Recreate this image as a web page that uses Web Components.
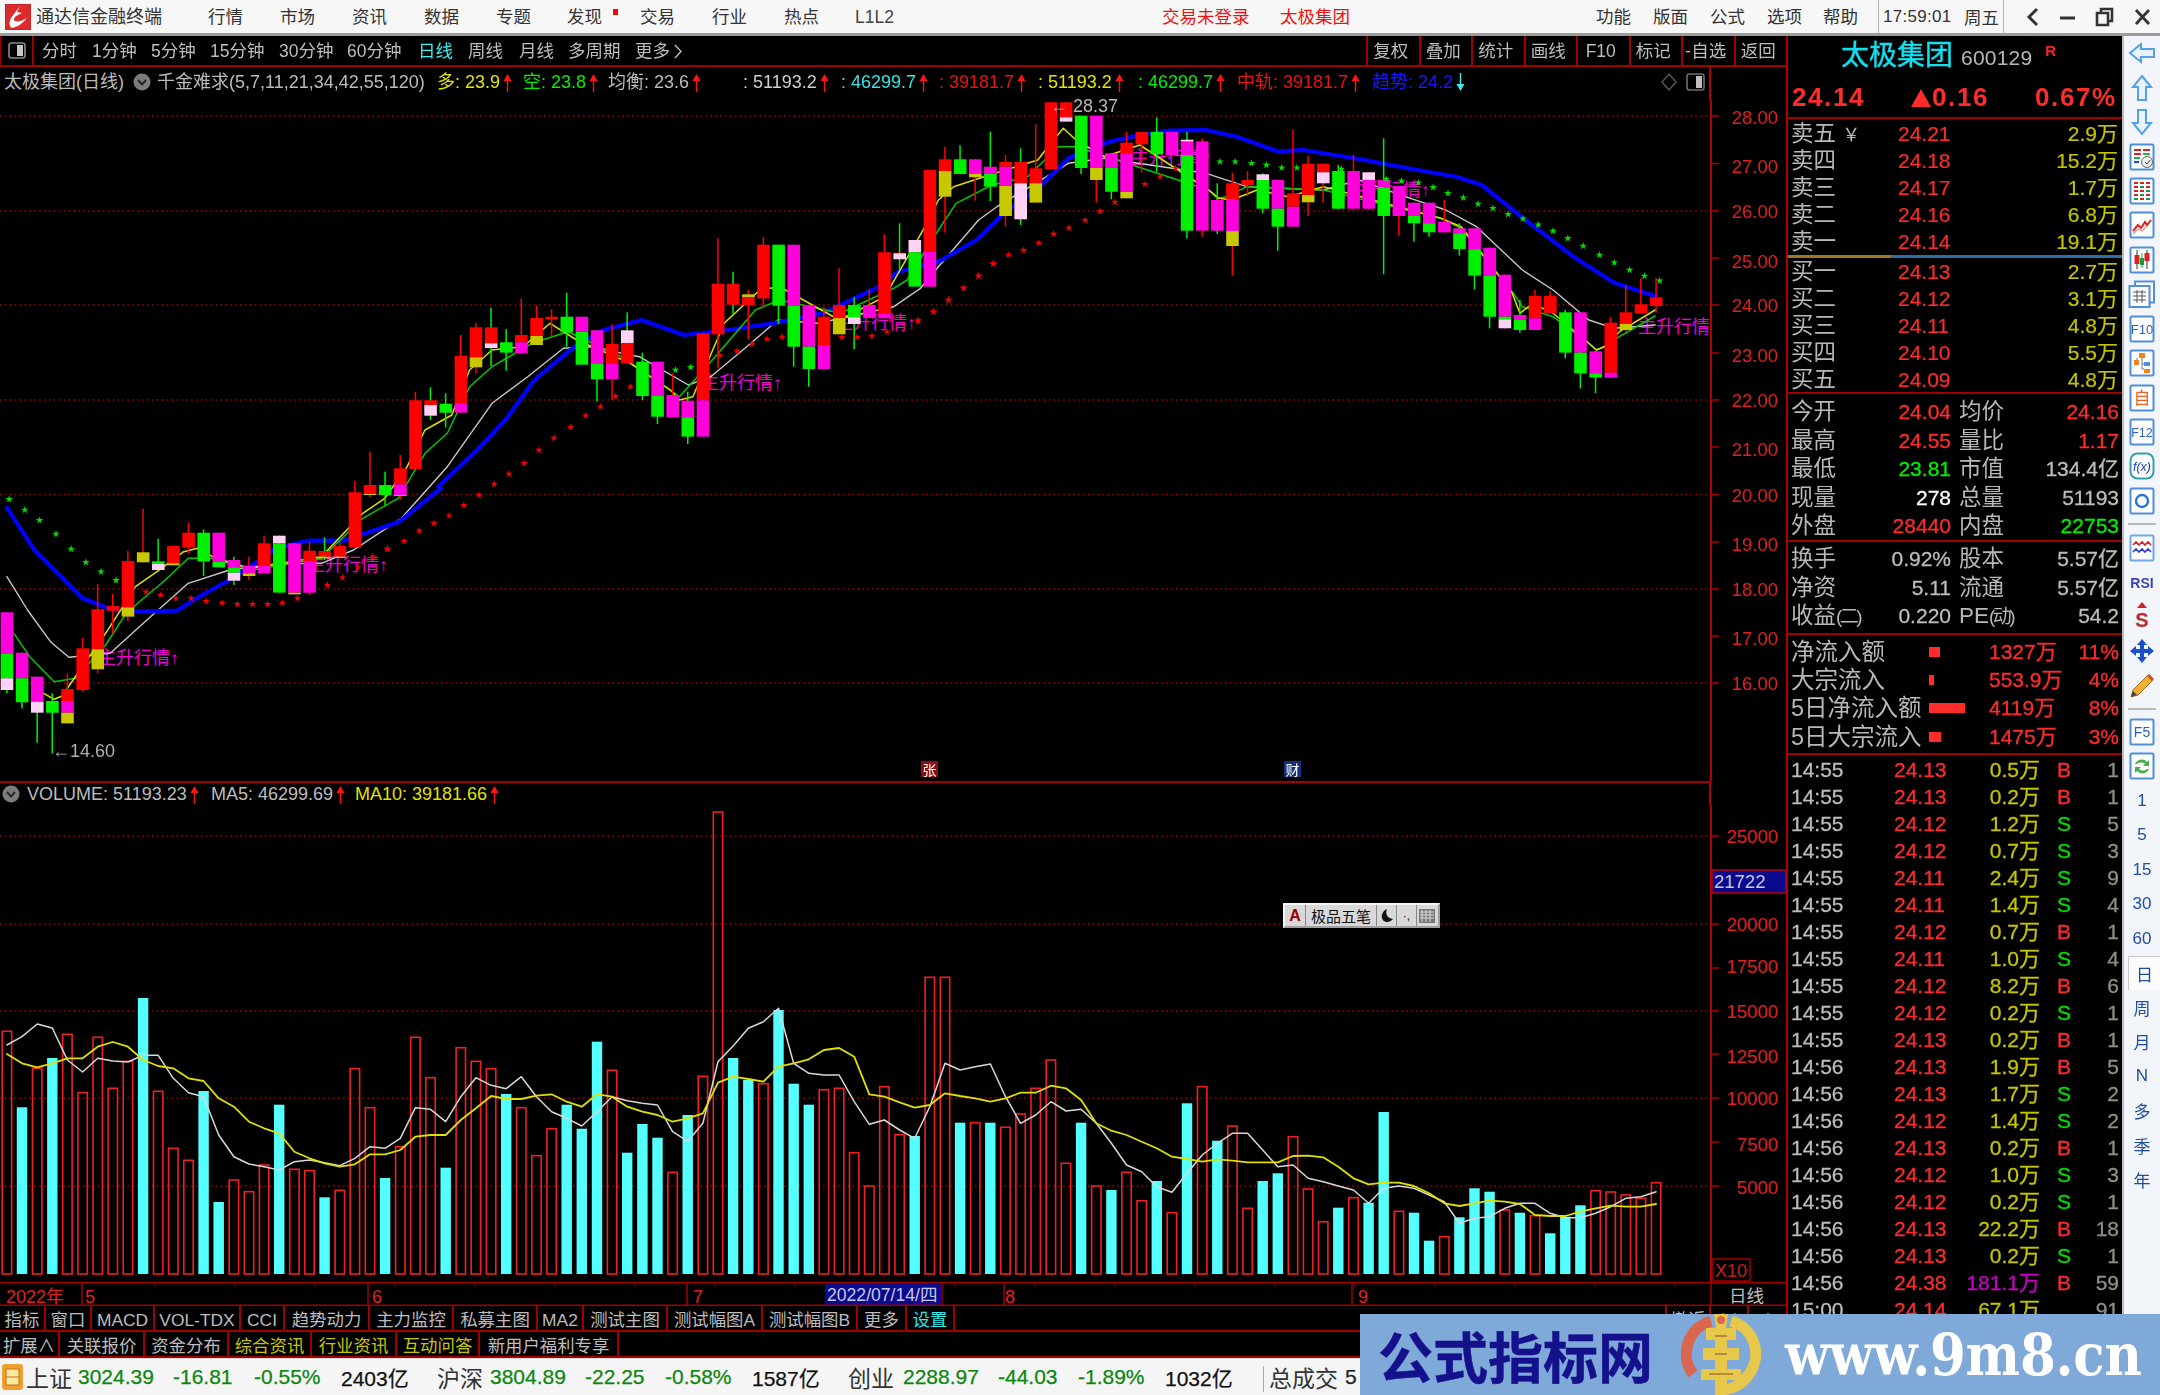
<!DOCTYPE html>
<html lang="zh"><head><meta charset="utf-8"><title>通达信金融终端</title>
<style>html,body{margin:0;padding:0;background:#000;overflow:hidden}body{width:2160px;height:1395px}</style>
</head><body><tdx-app></tdx-app>
<script>
const F="'Liberation Sans','Noto Sans CJK SC',sans-serif";
const COL={r:'#ff0000',g:'#00f000',m:'#ff00dc',p:'#ffd2f6',y:'#c8c800'};
function def(name,css,html){customElements.define(name,class extends HTMLElement{constructor(){super();const s=this.attachShadow({mode:'open'});s.innerHTML='<style>'+css+'</style>'+(typeof html==='function'?html(this):html);}});}
function seq(items,start,cls){let h='';let cur=start;items.forEach((it,k)=>{const next=k+1<items.length?items[k+1][0]:it[0]+(it[3]||200);if(it[0]>cur)h+=`<i style="flex:none;width:${it[0]-cur}px"></i>`;h+=`<span class="${cls||'s'}" style="flex:none;width:${next-it[0]}px;${it[2]?'color:'+it[2]:''}">${it[1]}</span>`;cur=next;});return h;}
const upA=(c='#ff1414')=>`<svg width="9" height="19" viewBox="0 0 9 19" style="flex:none;vertical-align:middle"><path d="M4.5 1L8.5 8H5.2V19H3.8V8H.5z" fill="${c}"/></svg>`;
const dnA=(c='#40e8e8')=>`<svg width="9" height="19" viewBox="0 0 9 19" style="flex:none;vertical-align:middle"><path d="M4.5 18L8.5 11H5.2V0H3.8V11H.5z" fill="${c}"/></svg>`;
const round=`<svg width="18" height="18" viewBox="0 0 18 18" style="vertical-align:middle;flex:none"><circle cx="9" cy="9" r="8.5" fill="#7c7c7c"/><path d="M5 7l4 4.5L13 7" fill="none" stroke="#262626" stroke-width="2"/></svg>`;

/* ---------- title bar ---------- */
const logo=`<svg width="26" height="26" viewBox="0 0 26 26" style="flex:none;margin:0 5px 0 5px"><rect width="26" height="26" fill="#dd2b2b" stroke="#b02020"/><path d="M15 2L6 14c-2 4-2 8 1 10 5-1 10-4 15-10-5 3-9 4-12 3-2-1-1-3 1-5l6-3-5-1z" fill="#fff"/></svg>`;
def('tdx-titlebar',`:host{display:flex;align-items:center;height:33px;background:#f7f7f7;border-bottom:3px solid #9c9c9c;font:17.5px ${F};color:#333;white-space:nowrap;box-sizing:content-box}
.s{display:block;line-height:35px;height:33px}.m{display:flex;align-items:center}.name{font-size:18px;flex:none;width:140px;line-height:35px;height:33px}
.time{flex:none;display:flex;align-items:center;height:33px;border-left:1px solid #b5b5b5;border-right:1px solid #b5b5b5;padding-left:4px;box-sizing:border-box;width:126px;margin-left:17px}
.time b{font-weight:400;width:81px;font-size:17px;letter-spacing:.3px}
.red{position:absolute;left:613px;top:9px;width:5px;height:6px;background:#f00}
svg{flex:none}.win{display:flex;align-items:center;margin-left:22px;gap:20px}
`,()=>{
 const it=[[208,'行情'],[280,'市场'],[352,'资讯'],[424,'数据'],[496,'专题'],[567,'发现'],[640,'交易'],[712,'行业'],[784,'热点'],[855,'L1L2','#444'],[1162,'交易未登录','#ee1111'],[1280,'太极集团','#ee1111'],[1596,'功能'],[1653,'版面'],[1710,'公式'],[1767,'选项'],[1823,'帮助',null,38]];
 return `${logo}<span class="name">通达信金融终端</span>${seq(it,176)}<span class="red"></span>
 <div class="time"><b>17:59:01</b><span>周五</span></div>
 <div class="win">
 <svg width="14" height="20" viewBox="0 0 14 20"><path d="M11 2L3 10l8 8" fill="none" stroke="#333" stroke-width="3"/></svg>
 <svg width="15" height="20" viewBox="0 0 15 20"><path d="M0 11h15" stroke="#333" stroke-width="3"/></svg>
 <svg width="19" height="20" viewBox="0 0 19 20"><path d="M6 5V2h11v12h-4M2 6h11v12H2z" fill="none" stroke="#333" stroke-width="2.6"/></svg>
 <svg width="17" height="20" viewBox="0 0 17 20"><path d="M2 3l13 14M15 3L2 17" stroke="#333" stroke-width="2.8"/></svg></div>`;});

/* ---------- tool bar ---------- */
def('tdx-toolbar',`:host{display:flex;height:29px;border-bottom:2px solid #a00000;font:17.5px/31px ${F};color:#bdbdbd;white-space:nowrap;background:#000;position:relative}
.tg{flex:none;width:34px;height:29px;border-right:2px solid #a00000;border-left:1px solid #a00000;display:flex;align-items:center;justify-content:center;box-sizing:border-box}
.s{display:block;height:29px}.b{flex:none;width:52.5px;height:29px;text-align:center;border-left:2px solid #a00000;box-sizing:border-box;padding-right:5px}.rt{display:flex;margin-left:auto}`,
()=>{const ch=`<svg width="8" height="15" viewBox="0 0 8 15" style="vertical-align:-2px;margin-left:4px"><path d="M1 1l6 6.5L1 14" fill="none" stroke="#bdbdbd" stroke-width="1.4"/></svg>`;
 const it=[[42,'分时'],[92,'1分钟'],[151,'5分钟'],[210,'15分钟'],[279,'30分钟'],[347,'60分钟'],[418,'日线','#3ef0f0'],[468,'周线'],[519,'月线'],[568,'多周期'],[635,'更多'+ch,null,80]];
 return `<div class="tg"><svg width="18" height="17" viewBox="0 0 18 17"><rect x="1" y="1" width="16" height="15" rx="2.5" fill="none" stroke="#8a8a8a" stroke-width="1.6"/><rect x="9" y="3" width="6" height="11" fill="#c8c8c8"/></svg></div>${seq(it,34)}
 <div class="rt">${['复权','叠加','统计','画线','F10','标记','-自选','返回'].map(t=>`<span class="b">${t}</span>`).join('')}</div>`;});

/* ---------- info rows ---------- */
const infoCss=`:host{display:flex;align-items:center;width:1711px;box-sizing:border-box;border-right:2px solid #b00000;font:18px/1 ${F};color:#bcbcbc;white-space:nowrap;background:#000;position:relative}.s{display:flex;align-items:center;gap:3px;box-sizing:border-box}`;
def('tdx-kinfo',infoCss+`:host{height:33px;padding-bottom:3px}`,()=>{
 const a=upA();
 const it=[[4,'太极集团(日线)'],[133,round],[157,'千金难求(5,7,11,21,34,42,55,120)'],[437,`<span>多: 23.9</span>${a}`,'#e6e600'],[523,`<span>空: 23.8</span>${a}`,'#00f000'],[608,`<span>均衡: 23.6</span>${a}`],[743,`<span>: 51193.2</span>${a}`,'#cfcfcf'],[841,`<span>: 46299.7</span>${a}`,'#33e6e6'],[939,`<span>: 39181.7</span>${a}`,'#e81414'],[1038,`<span>: 51193.2</span>${a}`,'#e6e600'],[1138,`<span>: 46299.7</span>${a}`,'#00f000'],[1237,`<span>中轨: 39181.7</span>${a}`,'#e81414'],[1372,`<span>趋势: 24.2</span>${dnA()}`,'#1818ff',288],[1660,`<svg width="18" height="20" viewBox="0 0 18 20"><path d="M9 2l7 8-7 8-7-8z" fill="none" stroke="#5a5a5a" stroke-width="1.4"/></svg>`],[1686,`<svg width="19" height="18" viewBox="0 0 19 18"><rect x="1" y="1" width="17" height="16" rx="2.5" fill="none" stroke="#707070" stroke-width="1.6"/><rect x="10" y="3" width="6" height="12" fill="#c0c0c0"/></svg>`,null,24]];
 return seq(it,0);});
def('tdx-vinfo',infoCss+`:host{height:24px;border-top:2px solid #a00000}`,()=>{
 const a=upA();const it=[[2,round],[27,`<span>VOLUME: 51193.23</span>${a}`],[211,`<span>MA5: 46299.69</span>${a}`],[355,`<span>MA10: 39181.66</span>${a}`,'#e0e000',144]];
 return seq(it,0);});

/* ---------- price chart ---------- */
const A=(p)=>[p[0]/2.178,440+p[1]/3],B=(p)=>[300+p[0]/2.24,200+p[1]/3],C=(p)=>[900+p[0]/1.96,90+p[1]/3];
const cx=i=>6.9+15.13*i;
const zy={A:y=>440+y/3,B:y=>200+y/3,C:y=>90+y/3};
const cA=[[517,760,'g','m',517,'g',642,'p',715,750],[638,805,'g','m',638,'g',715,787],[710,908,'g','m',710,'p',785,818],[760,940,'g','g',783,818],[700,850,'r','r',747,'m',783,'y',818,850],[593,755,'r','r',625,750],[432,700,'r','r',508,'y',628,688],[462,580,'r','r',498,512],[332,543,'r','r',363,'y',502,530],[206,367,'r','y',337,367],[296,390,'g','g',364,'p',372,390],[318,376,'r','r',318,'y',370,376],[247,340,'r','r',278,322],[268,408,'g','g',278,364],[278,382,'g','m',278,'g',366,382],[350,435,'g','m',360,'g',382,'p',398,422],[350,420,'r','m',377,'y',400,408],[288,400,'r','r',310,'m',378,400],[287,458,'g','p',287,'g',310,458],[310,463,'m','m',310,'y',458,463],[305,465,'r','r',332,'m',363,458],[292,360,'g','r',333,'y',350,355],[305,354,'r','r',318,'y',350,354],[122,322,'r','r',157,322],[35,172,'r','r',135,'y',162,165],[95,195,'g','g',135,165],[45,180,'r','r',85,'m',133,'y',165,168]];
const cB=[[575,807,'r','r',601,807],[562,660,'g','r',601,'p',615,647],[580,682,'g','g',611,638],[405,638,'r','r',467,'m',610,638],[368,520,'r','r',382,'y',472,502],[323,498,'g','r',382,'p',430,444],[387,512,'g','g',427,458],[296,460,'r','r',405,'m',427,460],[316,435,'r','r',354,'y',408,435],[328,410,'r','r',350,358],[278,440,'g','g',350,397],[350,494,'m','m',350,'g',395,494],[391,605,'g','m',391,'g',492,538],[373,600,'r','r',432,'m',490,538],[337,490,'g','p',391,'r',430,490],[458,600,'g','g',485,588],[485,672,'g','m',485,'g',588,650],[520,652,'r','m',585,652],[575,732,'g','m',602,'g',652,710],[400,710,'m','r',400,'m',601,710],[115,505,'r','r',251,403],[215,345,'g','r',251,314],[270,418,'r','y',283,'r',291,316],[112,325,'r','r',134,295],[134,372,'g','g',134,317],[134,500,'g','m',134,'g',318,440],[315,560,'g','m',315,'g',440,507],[320,507,'r','r',350,'m',435,507],[205,403,'r','r',315,'y',355,403],[292,448,'g','g',315,'p',352,372],[268,354,'r','m',315,354],[103,355,'r','r',157,'m',340,355],[70,210,'g','r',158,'p',160,178]];
const cC=[[450,590,'g','p',450,'g',487,590],[240,590,'m','r',240,'m',485,590],[170,428,'r','r',208,'y',243,320],[166,252,'g','g',208,252],[208,332,'r','m',208,'y',252,262],[125,333,'g','m',230,'g',252,290],[195,410,'r','r',216,'m',230,'y',288,378],[175,405,'g','r',216,'p',280,388],[103,338,'r','r',235,'y',280,338],[37,238,'r','r',37,238],[37,95,'g','r',37,'p',82,95],[77,252,'g','g',77,234],[77,337,'r','m',77,'y',234,270],[190,328,'g','m',190,'g',234,305],[125,325,'r','r',158,'m',190,'y',306,325],[126,248,'r','r',126,163],[82,245,'g','g',126,193],[126,196,'m','m',126,196],[125,445,'g','p',149,'m',155,'g',195,422],[145,440,'r','m',154,422],[280,432,'g','m',330,422],[248,557,'r','r',280,'m',328,'y',423,468],[243,318,'r','r',270,285],[250,370,'g','p',253,'g',270,356],[270,482,'g','m',270,'g',356,410],[118,410,'r','r',310,'m',350,410],[197,378,'r','r',221,'y',315,337],[221,338,'r','r',221,'p',247,280],[225,356,'g','g',243,356],[195,356,'r','m',243,356],[247,356,'m','p',247,'m',270,356],[145,553,'g','m',270,'g',292,378],[288,437,'r','m',288,378],[338,455,'g','m',338,'g',378,400],[338,440,'g','m',338,'g',400,427],[330,427,'r','m',395,427],[400,497,'g','m',415,'g',430,477],[415,598,'g','m',415,'g',478,557],[473,715,'g','m',473,'g',558,680],[554,715,'m','m',554,'g',680,'p',688,715],[630,728,'g','m',675,'g',690,720],[600,720,'r','r',617,'m',685,720],[603,670,'r','r',617,670],[660,805,'g','g',667,788],[667,895,'g','m',667,'g',788,850],[784,910,'g','m',784,'g',850,863],[680,863,'r','r',698,'m',848,863],[585,725,'r','r',667,'y',702,720],[565,670,'r','r',643,670],[565,668,'r','r',622,648]];
const poly=(pts,c,w)=>`<polyline points="${pts.map(p=>p[0].toFixed(1)+','+p[1].toFixed(1)).join(' ')}" fill="none" stroke="${c}" stroke-width="${w}" stroke-linejoin="round" stroke-linecap="round"/>`;
const L=(f,a)=>a.map(f);
const blue=[...L(A,[[15,203],[75,330],[130,405],[180,475],[245,510],[310,515],[385,512],[440,465],[500,420],[560,365],[600,325],[670,302],[750,302],[800,278],[870,245],[960,145]]),...L(B,[[310,860],[400,745],[460,660],[525,540],[610,445],[680,390],[765,360],[860,405],[960,390],[1060,370],[1170,340],[1290,265],[1340,215],[1430,185]]),...L(C,[[150,450],[200,375],[270,295],[330,205],[410,155],[470,135],[530,122],[600,120],[660,140],[740,184],[790,180],[900,207],[990,233],[1090,260],[1140,285],[1230,395],[1320,500],[1400,578],[1480,618]])];
const white=[...L(A,[[15,410],[60,510],[110,605],[150,652],[240,640],[320,540],[410,430],[500,390],[600,372],[700,370],[770,330],[880,230]]),...L(B,[[230,950],[330,800],[430,610],[510,530],[590,445],[650,440],[760,470],[870,555],[920,530],[1010,430],[1070,360],[1160,370],[1330,320],[1390,265],[1430,200],[1520,60]]),...L(C,[[190,350],[330,220],[400,205],[600,250],[680,290],[830,300],[900,270],[990,320],[1070,360],[1130,410],[1220,540],[1280,600],[1350,690],[1400,715],[1480,705]])];
const yellow=[...L(A,[[95,760],[118,778],[135,768],[230,580],[258,520],[295,440],[345,392],[400,335],[430,325],[470,355],[545,385],[700,350],[790,220]]),...L(B,[[190,895],[240,800],[280,690],[340,645],[380,510],[430,450],[500,440],[560,370],[620,420],[740,490],[830,570],[850,600],[880,590],[950,370],[1030,270],[1074,260],[1208,360],[1310,290],[1400,80],[1430,0]]),...L(C,[[105,290],[175,255],[270,210],[290,170],[320,115],[345,150],[400,200],[470,165],[605,300],[625,325],[650,330],[700,300],[760,320],[830,290],[1060,385],[1100,410],[1200,610],[1215,670],[1240,640],[1280,670],[1350,760],[1365,780],[1380,770],[1410,725],[1480,660]])];
const green=[...L(A,[[30,580],[65,650],[118,725],[165,715],[230,615],[270,530],[300,490],[360,420],[410,355],[460,355],[550,390],[700,355],[790,235]]),...L(B,[[220,895],[280,760],[330,700],[380,560],[430,500],[520,430],[600,395],[720,470],[850,590],[930,470],[1020,330],[1074,300],[1210,340],[1330,265],[1360,240],[1430,90]]),...L(C,[[110,340],[180,285],[250,260],[310,170],[345,170],[605,300],[622,325],[640,320],[680,290],[830,300],[1060,385],[1100,415],[1200,605],[1220,650],[1280,680],[1350,760],[1365,780],[1380,770],[1410,740],[1480,678]])];
const redS=[...L(A,[[318,456],[350,466],[383,475],[416,475],[449,484],[484,489],[517,493],[550,493],[583,493],[615,489],[648,475],[713,435],[746,413],[779,380],[812,350],[844,327]]),...L(B,[[196,1047],[233,1024],[267,992],[300,970],[334,947],[367,916],[401,885],[435,853],[468,822],[502,790],[535,750],[569,714],[606,682],[640,647],[673,620],[707,589],[740,560],[940,465],[979,453],[1013,433],[1046,417],[1080,411],[1214,412],[1248,412],[1281,408],[1315,395],[1385,362],[1419,335],[1453,300],[1486,264],[1520,228],[1553,190]]),...L(C,[[35,692],[66,665],[95,630],[125,594],[154,558],[183,522],[213,495],[242,481],[272,459],[301,432],[331,414],[363,391],[392,364],[421,337],[480,283],[510,260],[540,235]])];
const grnS=[...L(A,[[20,178],[54,210],[86,241],[122,282],[155,327],[187,367],[220,395],[253,421]]),...L(B,[[841,510],[875,502]]),...L(C,[[627,215],[657,215],[689,220],[718,225],[748,233],[778,233],[865,237],[953,268],[983,273],[1016,278],[1045,292],[1074,310],[1104,323],[1133,342],[1162,355],[1192,373],[1221,386],[1251,404],[1280,423],[1309,445],[1339,468],[1371,495],[1400,518],[1430,540],[1459,558],[1489,572]])];
function star(p,c){let s=[];for(let k=0;k<10;k++){const r=k%2?1.5:4,a=-Math.PI/2+k*Math.PI/5;s.push((p[0]+r*Math.cos(a)).toFixed(1)+','+(p[1]+r*Math.sin(a)).toFixed(1));}return `<polygon points="${s.join(' ')}" fill="${c}"/>`;}
function candle(a,i,zf){const x=cx(i);let h=`<rect x="${(x-.8).toFixed(1)}" y="${zf(a[0]).toFixed(1)}" width="1.5" height="${(zf(a[1])-zf(a[0])).toFixed(1)}" fill="${COL[a[2]]}"/>`;
 const n=a.length;for(let k=3;k<n-1;k+=2){const y0=zf(a[k+1]),y1=zf(k+3<n?a[k+3]:a[n-1]);h+=`<rect x="${(x-6.2).toFixed(1)}" y="${y0.toFixed(1)}" width="12.6" height="${(y1-y0).toFixed(1)}" fill="${COL[a[k]]}"/>`;}return h;}
const svgTxt=`font-family:${F};`;
const dots=(y)=>`<line x1="0" x2="1711" y1="${y}" y2="${y}" stroke="#a80000" stroke-width="1.3" stroke-dasharray="1.5 3.4"/>`;
def('tdx-kchart',`:host{display:block;position:relative;width:1787px;height:681px;background:#000}svg{display:block;overflow:visible}`,()=>{
 let g='';[116,211,305,400,494.5,589,683].forEach(y=>g+=dots(y));
 const ax=[['28.00',116,117],['27.00',163.5,166],['26.00',211,211],['25.00',258,261],['24.00',305,305],['23.00',353,355],['22.00',400,400],['21.00',447,449],['20.00',494.5,495],['19.00',542,544],['18.00',589,589],['17.00',636,638],['16.00',683,683]];
 let t='';ax.forEach(a=>{t+=`<line x1="1711" x2="1719" y1="${a[1]}" y2="${a[1]}" stroke="#b00000" stroke-width="1.5"/><text x="1778" y="${a[2]+6.5}" text-anchor="end" font-size="18.5" fill="#e02020">${a[0]}</text>`;});
 const labels=[[98,664],[307,571],[701,389],[835,329],[1131,164],[1349,196],[1638,333]].map(p=>`<text x="${p[0]}" y="${p[1]}" font-size="18" fill="#f000d8">主升行情↑</text>`).join('');
 let cs='';cA.forEach((a,k)=>cs+=candle(a,k,zy.A));cB.forEach((a,k)=>cs+=candle(a,k+27,zy.B));cC.forEach((a,k)=>cs+=candle(a,k+60,zy.C));
 return `<svg width="1787" height="681" viewBox="0 100 1787 681" style="${svgTxt}"><defs><clipPath id="cl"><rect x="0" y="100" width="1710" height="681"/></clipPath></defs>${g}<g clip-path="url(#cl)">${labels}${poly(white,'#c8c8c8',1.4)}${poly(blue,'#0000ff',4.2)}${poly(green,'#00c800',1.5)}${poly(yellow,'#e0e000',1.5)}${cs}${redS.map(p=>star(p,'#f00000')).join('')}${grnS.map(p=>star(p,'#00e000')).join('')}</g>
 <text x="1050" y="112" font-size="18" fill="#b8b8b8">←</text><text x="1073" y="112" font-size="18" fill="#b8b8b8">28.37</text>
 <text x="52" y="757" font-size="18" fill="#b0b0b0">←14.60</text>
 <rect x="921" y="761" width="17" height="16" fill="#8a1010"/><text x="929.5" y="775" text-anchor="middle" font-size="14" fill="#fff">张</text>
 <rect x="1284" y="761" width="17" height="16" fill="#15307a"/><text x="1292.5" y="775" text-anchor="middle" font-size="14" fill="#fff">财</text>
 <line x1="1711" x2="1711" y1="100" y2="781" stroke="#b00000" stroke-width="2"/>${t}</svg>`;});

/* ---------- volume chart ---------- */
const v10=[154,382,265,234,163,338,172,325,244,54,334,505,541,333,666,600,635,555,374,568,572,652,631,266,383,594,500,172,293,563,203,244,266,342,383,527,446,374,446,185,271,518,432,473,577,405,289,-504,234,300,311,90,311,374,329,325,518,618,320,464];
const v11=[858,382,382,818,818,818,832,792,715,630,940,818,1008,1020,967,1052,993,1088,760,710,872,828,1075,993,970,860,1017,1115,1073,1043,1058,786,1084,1088,1172,1160,1102,1015,1025,1080,1088,1097,1150,1100,1066,1022,1026,1035,1045,998];
const wh10=[195,170,132,144,240,276,235,243,246,226,226,295,338,350,465,530,552,560,570,545,540,548,557,535,500,505,475,383,388,425,350,293,316,326,290,350,395,415,438,395,350,362,370,375,455,484,430,245,198,145,125,85,250,280,285,285,365,433,420];
const wh11=[840,865,770,640,660,650,642,740,820,795,755,783,778,820,880,945,965,1010,1027,970,915,880,850,850,900,950,945,985,995,1008,1020,1060,1015,1008,1015,1035,1055,1120,1105,1100,1075,1060,1060,1090,1103,1103,1090,1070,1045,1040,1025];
const ye10=[222,250,262,250,235,235,200,186,200,240,258,265,295,303,355,380,425,445,460,515,535,550,560,553,523,523,510,470,465,465,420,385,348,357,357,347,343,365,380,343,350,380,395,405,425,415,400,308,290,297,305,260,250,238,210,204,230,343,350];
const ye11=[757,773,765,730,738,745,755,745,728,728,707,715,750,820,842,855,875,895,920,927,935,928,932,937,937,937,918,917,922,950,985,1003,998,998,1008,1030,1060,1068,1060,1052,1055,1062,1095,1098,1098,1085,1075,1067,1070,1070,1062];
const vy=(a,b)=>[...a.map((y,i)=>[cx(i),980+y/3]),...b.map((y,i)=>[cx(i+59),850+y/3])];
const types=['R','C','R','C','R','R','R','R','R','C','R','R','R','C','C','R','R','R','C','R','R','C','R','R','R','C','R','R','R','C','R','R','R','C','R','R','R','C','C','C','R','C','C','C','R','C','R','R','C','C','R','C','C','C','R','R','R','R','R','R','C','R','R','C','R','C','R','R','R','R','R','C','R','C','R','R','C','R','C','R','C','R','R','C','C','R','R','R','C','R','C','C','R','C','C','R','C','C','C','R','C','R','C','C','C','R','R','R','R','R'];
def('tdx-vchart',`:host{display:block;width:1787px;height:477px;background:#000}svg{display:block}`,()=>{
 let b='';const base=1274;
 types.forEach((ty,i)=>{const top=i<60?980+v10[i]/3:850+v11[i-60]/3,x=cx(i);
  b+=ty==='C'?`<rect x="${(x-5.2).toFixed(1)}" y="${top.toFixed(1)}" width="10.4" height="${(base-top).toFixed(1)}" fill="#54ffff"/>`:`<rect x="${(x-4.7).toFixed(1)}" y="${top.toFixed(1)}" width="9.4" height="${(base-top).toFixed(1)}" fill="none" stroke="#ee2020" stroke-width="1.6"/>`;});
 let g='';[836,924,1011,1098,1186].forEach(y=>g+=dots(y));
 const ax=[['25000',836,0],['20000',924,0],['17500',968,-2],['15000',1011,0],['12500',1054,2],['10000',1098,0],['7500',1142,2],['5000',1186,1]];
 let t='';ax.forEach(a=>{t+=`<line x1="1711" x2="1719" y1="${a[1]}" y2="${a[1]}" stroke="#b00000" stroke-width="1.5"/><text x="1778" y="${a[1]+a[2]+6.5}" text-anchor="end" font-size="18.5" fill="#e02020">${a[0]}</text>`;});
 return `<svg width="1787" height="477" viewBox="0 805 1787 477" style="${svgTxt}">${g}${b}${poly(vy(wh10,wh11),'#d8d8d8',1.5)}${poly(vy(ye10,ye11),'#e0e000',1.8)}
 <line x1="1711" x2="1711" y1="805" y2="1282" stroke="#b00000" stroke-width="2"/>${t}
 <rect x="1712" y="870" width="74" height="23" fill="#0a0a8c" stroke="#c00000" stroke-width="1.5"/><text x="1714" y="888" font-size="18.5" fill="#c8c8e8">21722</text>
 <rect x="1713" y="1259" width="37" height="22" fill="none" stroke="#a00000" stroke-width="1.5"/><text x="1715" y="1277" font-size="18" fill="#c02020">X10</text></svg>`;});

/* ---------- floating input method bar ---------- */
def('tdx-ime',`:host{position:absolute;left:1283px;top:903px;width:157px;height:25px;box-sizing:border-box;background:#d8d8d8;border:2px outset #f4f4f4;display:flex;align-items:center;font:16px ${F};color:#111;white-space:nowrap}
span{display:flex;align-items:center;justify-content:center;height:100%;border-right:1px solid #888;box-sizing:border-box}`,
`<span style="width:21px;color:#a00000;font-weight:700">A</span><span style="width:71px;font-size:15px">极品五笔</span><span style="width:20px"><svg width="12" height="14" viewBox="0 0 12 14"><path d="M6 0c-2 5 0 9 6 10-3 4-10 4-11-1C0 5 3 1 6 0z" fill="#111"/></svg></span><span style="width:20px;font-size:12px">·,</span><span style="width:20px;border:0"><svg width="16" height="14" viewBox="0 0 16 14"><rect width="16" height="14" fill="#777"/><path d="M1 3h14M1 6h14M1 9h14M3 1v12M7 1v12M11 1v12" stroke="#ddd"/></svg></span>`);

/* ---------- date axis ---------- */
def('tdx-dateaxis',`:host{display:block;width:1787px;height:24px;background:#000}svg{display:block}`,()=>{
 let v='';[82,368,687,942,1004,1352,1711].forEach(x=>v+=`<line x1="${x}" x2="${x}" y1="1283" y2="1306" stroke="#a00000" stroke-width="1.5"/>`);
 let tk='';for(let x=155;x<1700;x+=80)tk+=`<line x1="${x}" x2="${x}" y1="1283" y2="1287" stroke="#a00000"/>`;
 const l=[[6,'2022年'],[85,'5'],[372,'6'],[693,'7'],[1005,'8'],[1358,'9']].map(a=>`<text x="${a[0]}" y="1303" font-size="18" fill="#e02020">${a[1]}</text>`).join('');
 return `<svg width="1787" height="24" viewBox="0 1282 1787 24" style="${svgTxt}"><line x1="0" x2="1787" y1="1282.5" y2="1282.5" stroke="#a00000" stroke-width="2"/>${v}${tk}${l}
 <rect x="825" y="1284" width="117" height="21" fill="#0a0a8c"/><text x="827" y="1301" font-size="17.6" fill="#c8c8e8">2022/07/14/四</text>
 <text x="1729" y="1302" font-size="17.5" fill="#c0c0c0" text-anchor="start">日线</text>
 <line x1="0" x2="1787" y1="1305.5" y2="1305.5" stroke="#a00000" stroke-width="2"/></svg>`;});

/* ---------- tabs ---------- */
def('tdx-tab',`:host{display:block;flex:none;box-sizing:border-box;height:100%;border-right:2px solid #a00000;text-align:center;overflow:hidden;white-space:nowrap}`,`<slot></slot>`);
def('tdx-tabs',`:host{display:flex;width:1787px;height:26px;box-sizing:border-box;background:#000;border-bottom:2px solid #a00000;font:17.4px/28px ${F};color:#bdbdbd}.sp{flex:1}`,
 e=>`<slot></slot><span class="sp"></span><slot name="end"></slot>`);

/* ---------- quote panel ---------- */
const rowsBook=[['卖五 <small>￥</small>','24.21','2.9万'],['卖四','24.18','15.2万'],['卖三','24.17','1.7万'],['卖二','24.16','6.8万'],['卖一','24.14','19.1万']];
const rowsBuy=[['买一','24.13','2.7万'],['买二','24.12','3.1万'],['买三','24.11','4.8万'],['买四','24.10','5.5万'],['买五','24.09','4.8万']];
const trades=`14:55 24.13 0.5 B 1|14:55 24.13 0.2 B 1|14:55 24.12 1.2 S 5|14:55 24.12 0.7 S 3|14:55 24.11 2.4 S 9|14:55 24.11 1.4 S 4|14:55 24.12 0.7 B 1|14:55 24.11 1.0 S 4|14:55 24.12 8.2 B 6|14:55 24.12 0.2 S 1|14:55 24.13 0.2 B 1|14:56 24.13 1.9 B 5|14:56 24.13 1.7 S 2|14:56 24.12 1.4 S 2|14:56 24.13 0.2 B 1|14:56 24.12 1.0 S 3|14:56 24.12 0.2 S 1|14:56 24.13 22.2 B 18|14:56 24.13 0.2 S 1|14:56 24.38 181.1 B 59|15:00 24.14 67.1  91`.split('|').map(s=>s.split(' '));
def('tdx-book',`:host{display:block;border-bottom:2px solid #a00000;padding-top:1px;height:275px;box-sizing:border-box}
.r{display:grid;grid-template-columns:107px 1fr auto;height:27px;line-height:27px;padding:0 4px 0 3px;font-size:21px;-webkit-text-stroke:.2px}
.l{font-size:22.5px;color:#b8b8b8;-webkit-text-stroke:0}.l small{font-size:18px}.p{color:#ff2c2c}.v{color:#c4c400}
.d{height:3px;margin:0;background:linear-gradient(90deg,#a07820 0 103px,#2c6fa8 103px)}`,()=>{
 const f=a=>a.map(r=>`<div class="r"><span class="l">${r[0]}</span><span class="p">${r[1]}</span><span class="v">${r[2]}</span></div>`).join('');
 return f(rowsBook)+'<div class="d"></div>'+f(rowsBuy);});
const kv=(l1,v1,c1,l2,v2,c2)=>`<div class="r"><div class="c"><span class="l">${l1}</span><span style="color:${c1}">${v1}</span></div><div class="c"><span class="l">${l2}</span><span style="color:${c2}">${v2}</span></div></div>`;
def('tdx-stats',`:host{display:block;border-bottom:2px solid #a00000;padding:4px 0 0 0;box-sizing:border-box;height:148px}
.r{display:grid;grid-template-columns:160px 160px;gap:8px;height:28.5px;line-height:28.5px;padding-left:3px;font-size:21px;-webkit-text-stroke:.3px}
.c{display:flex;justify-content:space-between;white-space:nowrap}.l{font-size:22.5px;color:#b8b8b8;-webkit-text-stroke:0}.a{}`,()=>{
 const R='#ff2c2c',W='#bcbcbc',G='#00f000';
 return kv('今开','24.04',R,'均价','24.16',R)+kv('最高','24.55',R,'量比','1.17',R)+kv('最低','23.81',G,'市值','134.4亿',W)+kv('现量','278','#fff','总量','51193',W)+kv('外盘','28440',R,'内盘','22753',G);});
def('tdx-stats2',`:host{display:block;border-bottom:2px solid #a00000;padding:3px 0 0 0;box-sizing:border-box;height:93px}
.r{display:grid;grid-template-columns:160px 160px;gap:8px;height:28.5px;line-height:28.5px;padding-left:3px;font-size:21px;-webkit-text-stroke:.3px}
.c{display:flex;justify-content:space-between;white-space:nowrap}.l{font-size:22.5px;color:#b8b8b8;-webkit-text-stroke:0}.n{letter-spacing:-2.5px;font-size:19px;padding-right:3px}`,()=>{
 const W='#bcbcbc';return kv('换手','0.92%',W,'股本','5.57亿',W)+kv('净资','5.11',W,'流通','5.57亿',W)+kv('收益<span class="n">(二)</span>','0.220',W,'PE<span class="n">(动)</span>','54.2',W);});
def('tdx-flow',`:host{display:block;border-bottom:2px solid #a00000;padding:3px 0 0 0;box-sizing:border-box;height:120px}
.r{display:grid;grid-template-columns:138px 60px 66px 64px;height:28.2px;line-height:28.2px;padding-left:3px;font-size:21px;color:#ff2c2c;-webkit-text-stroke:.3px;white-space:nowrap}
.l{font-size:23.5px;color:#b8b8b8;-webkit-text-stroke:0}.n{text-align:right}.bw{display:flex;align-items:center}.bw i{display:block;height:10px;background:#ff2c2c}`,()=>
 [['净流入额',11,'1327万','11%'],['大宗流入',5,'553.9万','4%'],['5日净流入额',36,'4119万','8%'],['5日大宗流入',12,'1475万','3%']].map(r=>`<div class="r"><span class="l">${r[0]}</span><span class="bw"><i style="width:${r[1]}px"></i></span><span class="n">${r[2]}</span><span class="n">${r[3]}</span></div>`).join(''));
def('tdx-trades',`:host{display:block;flex:1;overflow:hidden;font-size:21px;-webkit-text-stroke:.3px;white-space:nowrap;padding-top:1px}
.r{display:grid;grid-template-columns:103px 60px 86px 40px 39px;height:27px;line-height:27px;padding-left:3px}
.t{color:#bcbcbc}.p{color:#ff2c2c}.v{text-align:right;color:#c4c400}.v.big{color:#c800c8}.s{padding-left:17px}.n{text-align:right;color:#8f8f8f}`,()=>
 trades.map(a=>`<div class="r"><span class="t">${a[0]}</span><span class="p">${a[1]}</span><span class="v${a[2]==='181.1'?' big':''}">${a[2]}万</span><span class="s" style="color:${a[3]==='B'?'#ff2c2c':'#00e000'}">${a[3]||''}</span><span class="n">${a[a.length-1]}</span></div>`).join(''));
def('tdx-quotehead',`:host{display:block;height:83px;border-bottom:2px solid #a00000;box-sizing:border-box;overflow:hidden}
.a{display:flex;align-items:flex-end;height:38px;padding-left:53px;white-space:nowrap;color:#b8b8b8}
.n{font-size:28px;color:#12dff0;line-height:36px;width:113px;flex:none;-webkit-text-stroke:.4px}.c{font-size:21px;margin-left:7px;line-height:32px;letter-spacing:.2px;flex:none}.R{color:#f22;font-size:15px;margin:0 0 15px 13px;flex:none;font-weight:700}
.b{display:flex;height:46px;align-items:center;padding-left:4px;font:700 26px ${F};color:#ff2c2c;letter-spacing:1.6px;white-space:nowrap}
.b span{flex:none;display:block}`,
 `<div class="a"><span class="n">太极集团</span><span class="c">600129</span><span class="R">R</span></div><div class="b"><span style="width:118px">24.14</span><span style="width:125px"><svg width="22" height="20" viewBox="0 0 22 20" style="vertical-align:-2px"><path d="M11 1l10 18H1z" fill="#ff2c2c"/></svg>0.16</span><span>0.67%</span></div>`);
def('tdx-quote',`:host{display:flex;flex-direction:column;flex:none;width:334px;height:1322px;background:#000;box-sizing:border-box;overflow:hidden;font-family:${F}}`,
 `<tdx-quotehead></tdx-quotehead><tdx-book></tdx-book><tdx-stats></tdx-stats><tdx-stats2></tdx-stats2><tdx-flow></tdx-flow><tdx-trades></tdx-trades>`);

/* ---------- side bar ---------- */
const frame=(inner,s='#4f8fdc')=>`<svg width="28" height="30" viewBox="0 0 28 30"><rect x="2.5" y="2.5" width="23" height="25" rx="1.5" fill="#fff" stroke="${s}" stroke-width="2"/>${inner}</svg>`;
const arrow=d=>`<svg width="30" height="30" viewBox="0 0 30 30"><path d="${d}" fill="#e8f3ff" stroke="#55a0e6" stroke-width="2"/></svg>`;
const ftxt=(t,c='#2a60c0',sz=13,x=14,fw=400)=>`<text x="${x}" y="20" font-size="${sz}" text-anchor="middle" fill="${c}" font-weight="${fw}">${t}</text>`;
const icons=[
 arrow('M3 15L14 6v5h13v8H14v5z'),arrow('M15 3l9 11h-5v13h-8V14H6z'),arrow('M15 27L6 16h5V3h8v13h5z'),
 frame(`<path d="M6 8h7M15 8h7M6 12h7" stroke="#e02020" stroke-width="2.2"/><path d="M6 16h6M15 12h7" stroke="#20b040" stroke-width="2.2"/><path d="M6 20h5" stroke="#2050c0" stroke-width="2.2"/><circle cx="19" cy="20" r="5.5" fill="#eee" stroke="#666"/><path d="M17 20l2 2 3-4" fill="none" stroke="#444"/>`),
 frame(`<path d="M6 7h4M12 7h4M18 7h4M6 11h4M18 11h4M6 15h4M12 15h4M6 19h4M18 19h4M12 23h4" stroke="#e02020" stroke-width="2.2"/><path d="M12 11h4M18 15h4M12 19h4M6 23h4M18 23h4" stroke="#1a9a40" stroke-width="2.2"/>`),
 frame(`<path d="M5 21l5-6 3 3 4-6 2 3 4-5" fill="none" stroke="#e02020" stroke-width="2"/><path d="M5 24l5-5 4 2 5-5" fill="none" stroke="#f09090" stroke-width="1.2"/>`),
 frame(`<path d="M9 5v19M19 5v19" stroke="#333"/><rect x="6.5" y="10" width="5" height="9" fill="#e02020"/><rect x="16.5" y="8" width="5" height="8" fill="#e02020"/><path d="M14 8v15" stroke="#1a9a40"/><rect x="12" y="13" width="4" height="7" fill="#1a9a40"/>`),
 `<svg width="30" height="30" viewBox="0 0 30 30"><rect x="8" y="2.5" width="19" height="21" fill="#fff" stroke="#4f8fdc" stroke-width="2"/><rect x="2.5" y="7" width="20" height="21" fill="#fff" stroke="#4f8fdc" stroke-width="2"/><path d="M6 13h13M6 17h13M6 21h13M10 11v13M15 11v13" stroke="#555"/></svg>`,
 frame(ftxt('F10','#2a60c0',13)),
 frame(`<rect x="11" y="5" width="6" height="5" fill="#f08020"/><rect x="6" y="12" width="5" height="5" fill="#f08020"/><rect x="16" y="14" width="6" height="4" fill="#4f8fdc"/><rect x="16" y="21" width="6" height="4" fill="#f08020"/><path d="M9 10v2M14 10v11h2M14 16h2" stroke="#777" fill="none"/>`),
 frame(`<text x="14" y="21" font-size="17" text-anchor="middle" fill="#f06020">自</text>`),
 frame(ftxt('F12','#2a60c0',12.5)),
 `<svg width="28" height="30" viewBox="0 0 28 30"><rect x="2.5" y="2.5" width="23" height="25" rx="7" fill="#fff" stroke="#35a0a8" stroke-width="2"/><text x="14" y="20" font-size="12.5" text-anchor="middle" fill="#1a40b0" font-style="italic">f(x)</text></svg>`,
 frame(`<circle cx="14" cy="15" r="6" fill="none" stroke="#2a70d0" stroke-width="2.4"/>`),
 'sep',
 frame(`<path d="M5 12l3-3 3 3 3-3 3 3 3-3 3 3" fill="none" stroke="#e02020" stroke-width="1.6"/><path d="M5 19l3-3 3 3 3-3 3 3 3-3 3 3" fill="none" stroke="#3040d0" stroke-width="1.6"/>`,'#6fa8e6'),
 `<svg width="30" height="30" viewBox="0 0 30 30"><text x="15" y="21" font-size="14" font-weight="700" text-anchor="middle" fill="#3a44b8">RSI</text></svg>`,
 `<svg width="30" height="30" viewBox="0 0 30 30"><path d="M15 1l5 6h-10z" fill="#d02020"/><text x="15" y="26" font-size="20" font-weight="700" text-anchor="middle" fill="#d02020" stroke="#888" stroke-width=".4">S</text></svg>`,
 `<svg width="30" height="30" viewBox="0 0 30 30"><path d="M15 3l5 6h-3v4h4v-3l6 5-6 5v-3h-4v4h3l-5 6-5-6h3v-4H9v3l-6-5 6-5v3h4V9h-3z" fill="#1a4fc8"/></svg>`,
 `<svg width="30" height="30" viewBox="0 0 30 30"><path d="M6 20L21 5l5 5-15 15-7 2z" fill="#f0b030" stroke="#a07020"/><path d="M21 5l5 5" stroke="#d05030" stroke-width="3"/><path d="M4 27l2-6 4 4z" fill="#444"/></svg>`,
 'sep',
 frame(ftxt('F5','#2a60c0',14)),
 frame(`<path d="M7 13c2-5 9-6 12-2l2-2v6h-6l2-2c-2-2-6-2-8 0zM21 18c-2 5-9 6-12 2l-2 2v-6h6l-2 2c2 2 6 2 8 0z" fill="#48b048"/>`),
 ...['1','5','15','30','60','日','周','月','N','多','季','年'].map(t=>({t}))];
def('tdx-sidebar',`:host{display:flex;flex-direction:column;flex:none;width:38px;height:1322px;background:#f2f5f9;border-left:2px solid #bdbdbd;box-sizing:border-box;font:17px ${F};color:#1f4da3;align-items:center}
.i{height:34.45px;width:100%;flex:none;display:flex;align-items:center;justify-content:center;box-sizing:border-box}.i:first-child{margin-top:-4px}
svg{display:block;font-family:${F}}.sep{height:12.2px;flex:none;width:28px;display:flex;align-items:center}.sep i{display:block;width:100%;height:2px;background:#b8b8b8}
.on{background:#fbfbfb;border:1px solid #c8c8c8;border-right:0;border-bottom:0;margin-left:4px;width:32px}`,()=>
 icons.map(x=>x==='sep'?'<div class="sep"><i></i></div>':typeof x==='object'?`<div class="i${x.t==='日'?' on':''}">${x.t}</div>`:`<div class="i">${x}</div>`).join(''));

/* ---------- status bar ---------- */
def('tdx-status',`:host{display:flex;align-items:center;height:37px;background:#f5f5f5;border-top:1px solid #ddd;box-sizing:border-box;font:21px ${F};color:#222;white-space:nowrap;-webkit-text-stroke:.25px}.s{display:block;flex:none}`,()=>{
 const G='#0d860f',K='#111';const cj=t=>`<span style="font-size:23px;color:#333;-webkit-text-stroke:0">${t}</span>`;
 const it=[[2,`<svg width="21" height="26" viewBox="0 0 21 26" style="display:block"><rect width="21" height="26" rx="3" fill="#f0a030"/><rect x="4" y="5" width="13" height="16" fill="#ffe9a0" stroke="#c07010"/><path d="M4 13h13" stroke="#c07010"/></svg>`],[26,cj('上证')],[78,'3024.39',G],[173,'-16.81',G],[254,'-0.55%',G],[341,'2403亿',K],[437,cj('沪深')],[490,'3804.89',G],[585,'-22.25',G],[665,'-0.58%',G],[752,'1587亿',K],[848,cj('创业')],[903,'2288.97',G],[998,'-44.03',G],[1078,'-1.89%',G],[1165,'1032亿',K],[1263,`<span style="border-left:1px solid #aaa;padding-left:5px;font-size:23px;color:#333;-webkit-text-stroke:0">总成交</span>`],[1345,'5',null,15]];
 return seq(it,0);});

/* ---------- watermark ---------- */
def('tdx-watermark',`:host{position:absolute;left:1360px;top:1314px;width:800px;height:81px;background:#7ea9d8;display:flex;align-items:center;overflow:hidden;white-space:nowrap}
.c{font:700 55px 'Noto Sans CJK SC',sans-serif;color:#15108c;margin-left:18px;flex:none;width:278px;line-height:81px;-webkit-text-stroke:.5px}
svg{flex:none;margin-left:25px}.u{font:700 51.5px 'DejaVu Serif',serif;color:#fff;margin-left:24px;flex:none;display:inline-block;transform:scaleY(1.12);letter-spacing:-.2px}`,
 `<span class="c">公式指标网</span><svg width="80" height="81" viewBox="0 0 80 81"><path d="M12 60A34 34 0 0 1 30 7" fill="none" stroke="#d9674f" stroke-width="11"/><path d="M50 7A34 34 0 0 1 68 60" fill="none" stroke="#e8c84a" stroke-width="11"/><path d="M68 60A34 34 0 0 1 40 76" fill="none" stroke="#e8c84a" stroke-width="11"/><path d="M33 0h14l-2 14h10v12H46v8h12v12H46v9h14v11H46v15H34V66H20V55h14v-9H22V34h12v-8H25V14h10z" fill="#e8c84a"/><circle cx="40" cy="6" r="4" fill="#d9674f"/><path d="M34 22h12M34 40h12M28 60h24" stroke="#b98a3a" stroke-width="2"/></svg><span class="u">www.9m8.cn</span>`);

/* ---------- app ---------- */
const tab=(t,w,c)=>`<tdx-tab style="width:${w}px${c?';color:'+c:''}">${t}</tdx-tab>`;
def('tdx-app',`:host{display:flex;flex-direction:column;position:relative;width:2160px;height:1395px;overflow:hidden;background:#000;font-family:${F}}
.main{display:flex;height:1322px;flex:none;filter:blur(.35px)}.left{display:block;flex:none;width:1788px;border-right:2px solid #b00000;box-sizing:border-box;overflow:hidden}`,()=>{
 const Y='#c8c800';
 const t1=[['指标',46],['窗口',46],['MACD',63],['VOL-TDX',86],['CCI',44],['趋势动力',85],['主力监控',84],['私募主图',84],['MA2',46],['测试主图',84],['测试幅图A',95],['测试幅图B',95],['更多',49],['设置',48,'#33e8e8']].map(a=>tab(...a)).join('');
 const t2=[['扩展∧',60],['关联报价',85],['资金分布',84],['综合资讯',83,Y],['行业资讯',85,Y],['互动问答',83,Y],['新用户福利专享',139]].map(a=>tab(...a)).join('');
 return `<tdx-titlebar></tdx-titlebar>
 <div class="main"><div class="left"><tdx-toolbar></tdx-toolbar><tdx-kinfo></tdx-kinfo><tdx-kchart></tdx-kchart><tdx-vinfo></tdx-vinfo><tdx-vchart></tdx-vchart><tdx-dateaxis></tdx-dateaxis>
 <tdx-tabs>${t1}<tdx-tab slot="end" style="width:46px;border-left:2px solid #a00000">撤近</tdx-tab><tdx-tab slot="end" style="width:38px">∨</tdx-tab><tdx-tab slot="end" style="width:38px;border-right:0">∧</tdx-tab></tdx-tabs>
 <tdx-tabs>${t2}</tdx-tabs></div><tdx-quote></tdx-quote><tdx-sidebar></tdx-sidebar></div>
 <tdx-status></tdx-status><tdx-ime></tdx-ime><tdx-watermark></tdx-watermark>`;});
</script></body></html>
